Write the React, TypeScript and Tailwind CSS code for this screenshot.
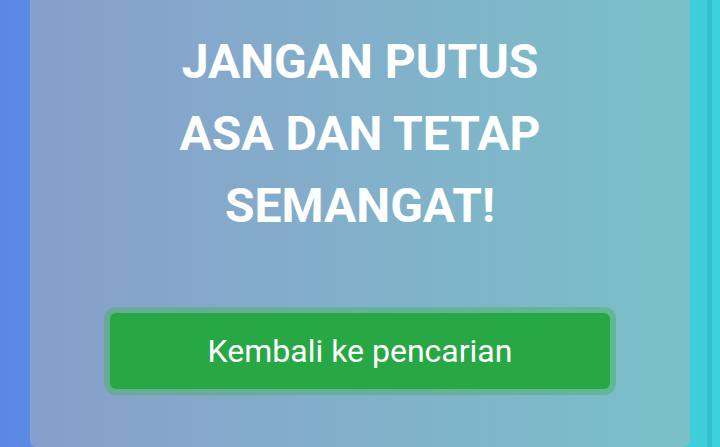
export default function App() {
  return (
    <div
      className="flex h-[447px] w-[720px] overflow-hidden bg-gradient-to-r from-[#5b87e4] to-[#3bd0dc]"
      style={{ fontFamily: 'Roboto, "Liberation Sans", sans-serif' }}
    >
      <div className="w-[30px] shrink-0" />
      <main className="flex w-[660px] shrink-0 flex-col items-center rounded-b-md bg-[#b3b3b3]/50 pt-[26px]">
        <h1 className="w-[420px] text-center text-[48px] font-bold leading-[72px] text-white">
          JANGAN PUTUS ASA DAN TETAP SEMANGAT!
        </h1>
        <button
          type="button"
          className="mt-[71px] h-[76px] w-[500px] rounded-md bg-[#28a745] text-[32px] text-white shadow-[0_0_0_6px_rgba(72,180,97,0.5)]"
        >
          Kembali ke pencarian
        </button>
      </main>
      <div className="flex w-[30px] shrink-0">
        <div className="w-[17px]" />
        <div className="w-[5px] bg-[#34bfcf]" />
      </div>
    </div>
  );
}
